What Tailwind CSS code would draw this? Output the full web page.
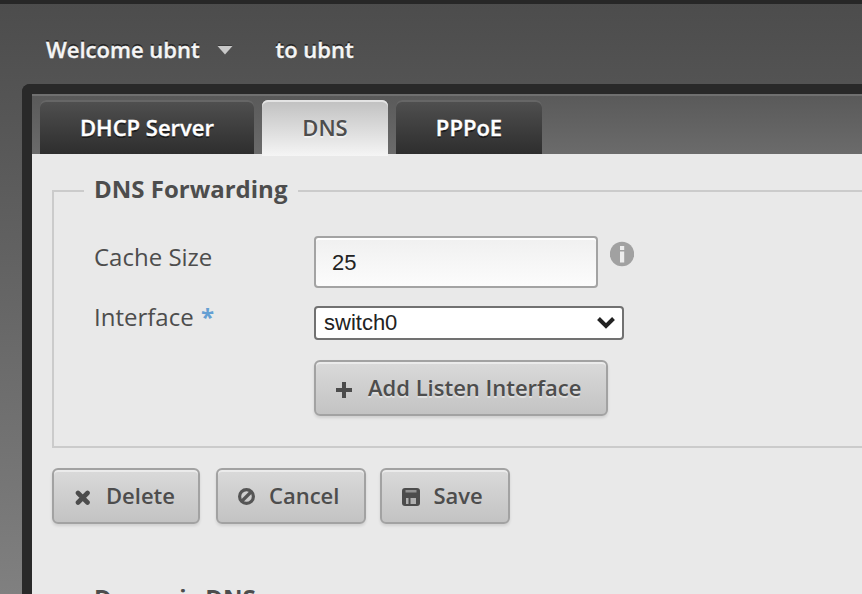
<!DOCTYPE html>
<html lang="en">
<head>
<meta charset="utf-8">
<title>Services</title>
<script src="https://cdn.jsdelivr.net/npm/@tailwindcss/browser@4"></script>
</head>
<body class="flex h-[594px] w-full flex-col overflow-hidden border-t-4 border-[#272727] bg-linear-to-b from-[#4c4c4c] to-[#808080] font-['Open_Sans','Noto_Sans',sans-serif] text-[#4d4d4d]">
  <header class="flex h-20 shrink-0 items-center pt-[10px] pl-[46px] text-[22px] leading-[30px] font-semibold text-[#f5f5f5] [-webkit-text-stroke:0.35px_#f5f5f5] [text-shadow:0_-2px_0_#262626]">
    <span class="w-[154px] whitespace-nowrap">Welcome ubnt</span>
    <svg class="mt-px ml-[17px] h-[10px] w-4" viewBox="0 0 16 10"><path d="M0.500 1h15L8 9.500z" fill="#c8c8c8"/><path d="M1 0h14v1H1z" fill="#3a3a3a"/></svg>
    <span class="ml-[42.500px] whitespace-nowrap">to ubnt</span>
  </header>
  <main class="ml-[22px] flex min-h-0 flex-1 flex-col rounded-tl-[8px] border-t-[10px] border-l-[10px] border-[#292929]">
    <nav class="flex h-[60px] shrink-0 gap-2 border-t-2 border-[#707070] bg-linear-to-b from-[#5a5a5a] to-[#6b6b6b] pt-1 pl-2 text-[22px] leading-[30px] font-semibold text-white [text-shadow:0_2px_0_#1c1c1c]">
      <a class="flex h-[54px] w-[214px] items-center justify-center rounded-t-[6px] bg-linear-to-b from-[#505050] to-[#2e2e2e] whitespace-nowrap shadow-[inset_0_2px_0_#666666] [-webkit-text-stroke:0.35px_#fff]">DHCP Server</a>
      <a class="z-10 flex h-14 w-[126px] items-center justify-center rounded-t-[6px] bg-linear-to-b from-[#c0c0c0] to-[#f5f5f5] pb-0.5 whitespace-nowrap text-[#4d4d4d] shadow-[inset_0_2px_0_#e4e4e4] [text-shadow:0_2px_0_#f0f0f0]">DNS</a>
      <a class="flex h-[54px] w-[146px] items-center justify-center rounded-t-[6px] bg-linear-to-b from-[#505050] to-[#2e2e2e] whitespace-nowrap shadow-[inset_0_2px_0_#666666] [-webkit-text-stroke:0.35px_#fff]">PPPoE</a>
    </nav>
    <section class="min-h-0 flex-1 overflow-hidden bg-[#e9e9e9] pt-5 pl-5">
      <fieldset class="h-[274px] w-[900px] border-2 border-[#cbcbcb] pl-10">
        <legend class="-ml-[10px] h-[34px] pr-[11px] pl-[10px] text-[24px] leading-[29px] font-bold whitespace-nowrap">DNS Forwarding</legend>
        <div class="mt-[28px] flex h-[52px]">
          <label class="w-[220px] shrink-0 pt-[5px] text-[24px] leading-[32px]">Cache Size</label>
          <input class="h-[52px] w-[284px] rounded-[4px] border-2 border-[#a3a3a3] bg-linear-to-b from-[#f0f0f0] to-[#fcfcfc] px-4 pt-0.5 font-['Liberation_Sans',sans-serif] text-[22px] text-[#222] shadow-[inset_0_2px_0_#fff]" value="25">
          <svg class="mt-[5px] ml-3 h-[26px] w-6" viewBox="0 0 24 26"><circle cx="12" cy="13" r="12.200" fill="#a1a1a1"/><path d="M10 5h4.200v4H10zM10 10.500h4.200v11H10z" fill="#ededed"/></svg>
        </div>
        <div class="mt-[18px] flex h-[34px]">
          <label class="w-[220px] shrink-0 text-[24px] leading-[22px]">Interface <b class="ml-px text-[#659fd3]">*</b></label>
          <div class="flex h-[34px] w-[310px] items-center justify-between rounded-[4px] border-2 border-[#717171] bg-white pr-[7px] pl-2 font-['Liberation_Sans',sans-serif] text-[22px] leading-[30px] text-[#222]">
            <span>switch0</span>
            <svg class="h-[14px] w-[18px]" viewBox="0 0 18 14"><path d="M1.500 2.500 9 10l7.500-7.500" fill="none" stroke="#222" stroke-width="4"/></svg>
          </div>
        </div>
        <button class="mt-5 ml-[220px] flex h-14 w-[294px] items-center rounded-[6px] border-2 border-[#a2a2a2] bg-linear-to-b from-[#dadada] to-[#c3c3c3] pb-0.5 pl-5 text-[22px] leading-[30px] font-semibold whitespace-nowrap shadow-[inset_0_2px_0_#ebebeb,0_2px_3px_#0000001c] [text-shadow:0_2px_0_#e0e0e0]">
          <svg class="mt-[6px] mr-4 h-4 w-4" viewBox="0 0 16 16"><path d="M8 0v16M0 8h16" stroke="#4c4c4c" stroke-width="4"/></svg>Add Listen Interface
        </button>
      </fieldset>
      <div class="mt-5 flex text-[22px] leading-[30px] font-semibold whitespace-nowrap [text-shadow:0_2px_0_#e0e0e0]">
        <button class="flex h-14 w-[148px] items-center rounded-[6px] border-2 border-[#a2a2a2] bg-linear-to-b from-[#dadada] to-[#c3c3c3] pb-0.5 pl-[21px] shadow-[inset_0_2px_0_#ebebeb,0_2px_3px_#0000001c]">
          <svg class="mt-[5px] mr-4 h-[15px] w-[15px]" viewBox="0 0 15 15"><path d="M3 3 12.500 12.500M12.500 3 3 12.500" stroke="#4c4c4c" stroke-width="4.600" stroke-linecap="round"/></svg>Delete
        </button>
        <button class="ml-4 flex h-14 w-[150px] items-center rounded-[6px] border-2 border-[#a2a2a2] bg-linear-to-b from-[#dadada] to-[#c3c3c3] pb-0.5 pl-5 shadow-[inset_0_2px_0_#ebebeb,0_2px_3px_#0000001c]">
          <svg class="mt-[3px] mr-[14px] h-[17px] w-[17px]" viewBox="0 0 17 17"><circle cx="8.500" cy="8.500" r="6.900" fill="none" stroke="#555" stroke-width="3.200"/><path d="M4 13 13 4" stroke="#555" stroke-width="3.200"/></svg>Cancel
        </button>
        <button class="ml-[14px] flex h-14 w-[130px] items-center rounded-[6px] border-2 border-[#a2a2a2] bg-linear-to-b from-[#dadada] to-[#c3c3c3] pb-0.5 pl-5 shadow-[inset_0_2px_0_#ebebeb,0_2px_3px_#0000001c]">
          <svg class="mt-1 mr-[13.500px] h-[18px] w-[18px]" viewBox="0 0 18 18"><rect width="18" height="18" rx="3" fill="#4c4c4c"/><path d="M3.500 2h11v2.500h-11z" fill="#929292"/><path d="M4 10h2.500v6H4zM8.500 10H14v6H8.500z" fill="#b0b0b0"/></svg>Save
        </button>
      </div>
      <h2 class="mt-[58px] ml-[42px] text-[24px] leading-[31px] font-bold whitespace-nowrap">Dynamic DNS</h2>
    </section>
  </main>
</body>
</html>
